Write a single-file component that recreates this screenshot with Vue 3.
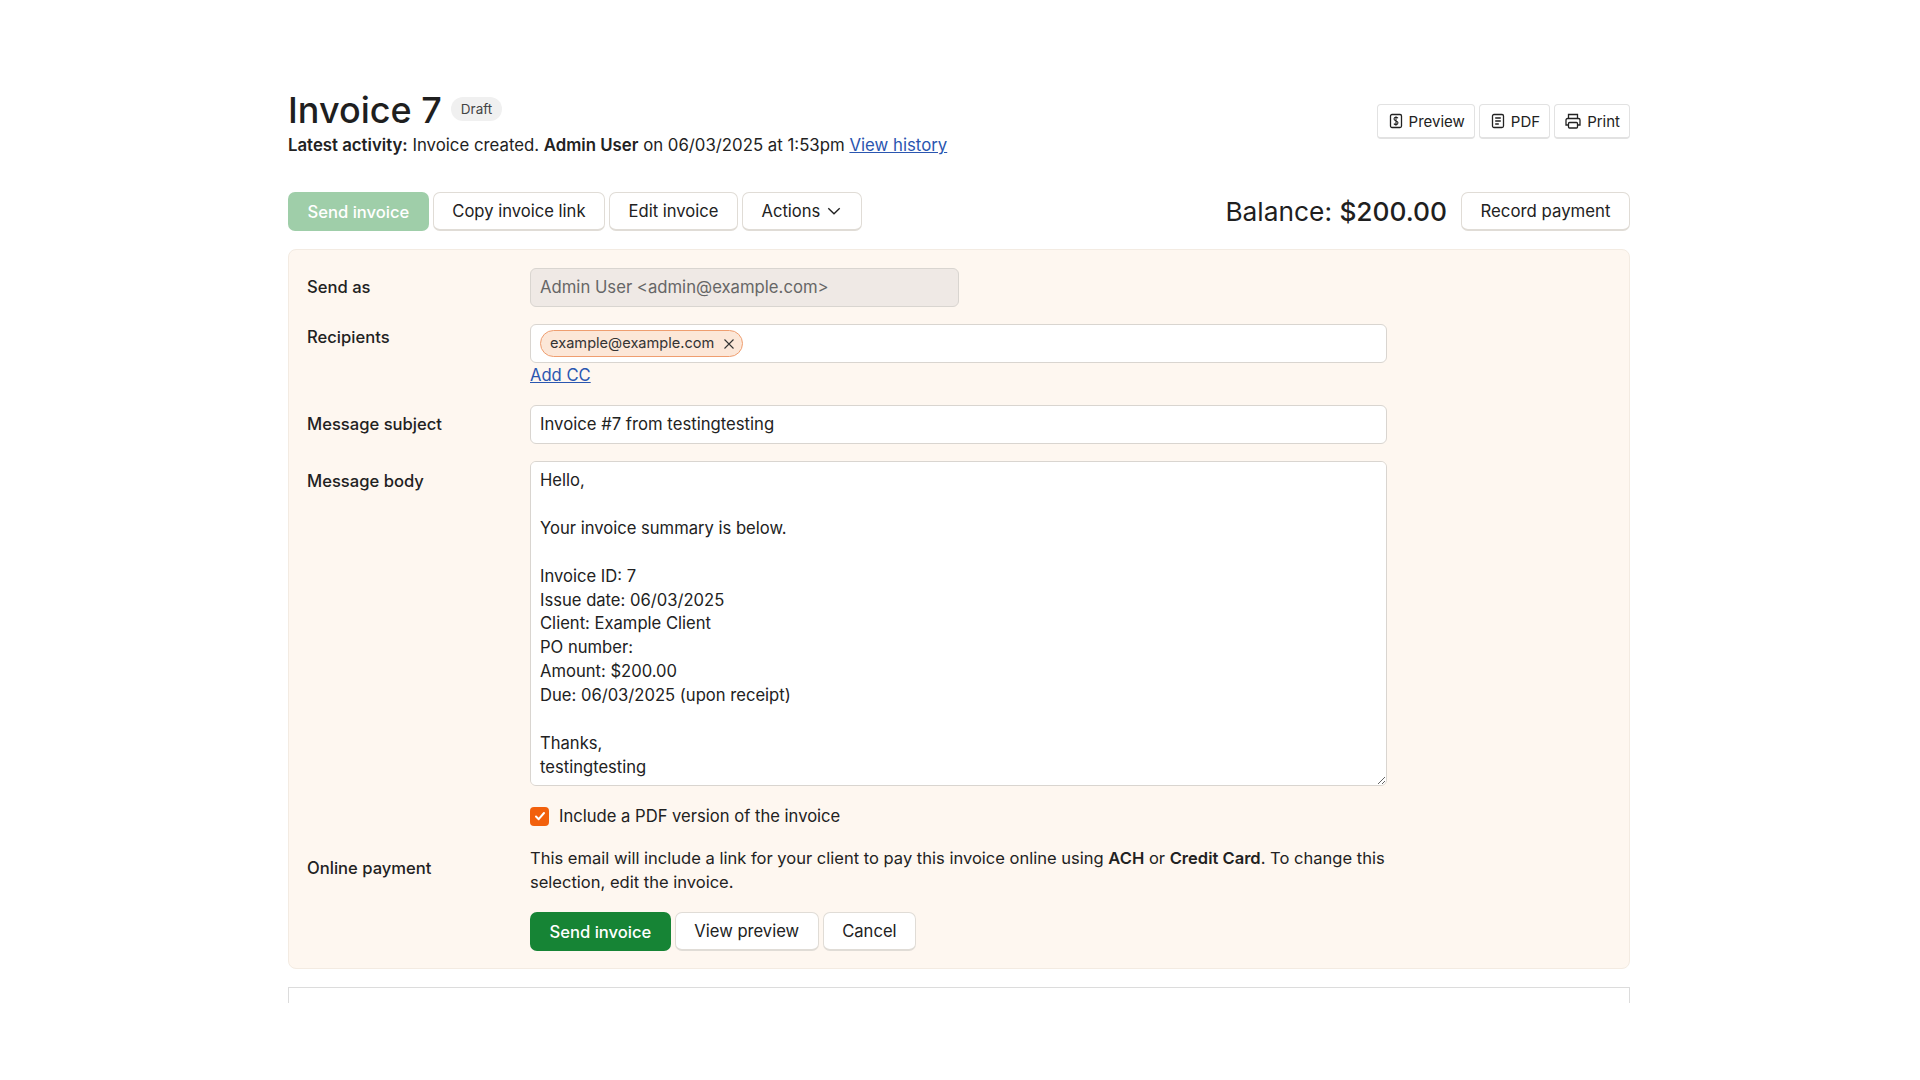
<script setup>
const body = `Hello,

Your invoice summary is below.

Invoice ID: 7
Issue date: 06/03/2025
Client: Example Client
PO number:
Amount: $200.00
Due: 06/03/2025 (upon receipt)

Thanks,
testingtesting`
</script>

<template>
  <div class="page">
    <header class="head">
      <div>
        <div class="title-row">
          <h1>Invoice 7</h1>
          <span class="badge">Draft</span>
        </div>
        <p class="activity"><b>Latest activity:</b> Invoice created. <b>Admin User</b> on 06/03/2025 at 1:53pm <a href="#">View history</a></p>
      </div>
      <div class="tools">
        <button class="tool wide">
          <svg width="16" height="16" viewBox="0 0 16 16" fill="none" stroke="currentColor" stroke-width="1.3"><rect x="2.5" y="1.5" width="11" height="13" rx="1.5"/><path d="M10 5.2C9.6 4.6 9 4.3 8 4.3c-1.2 0-2 .6-2 1.7 0 2.3 4 1.5 4 3.8 0 1.1-.8 1.8-2 1.8-1 0-1.700-.4-2.100-1M8 3.300v9.400" stroke-width="1.1"/></svg>
          Preview
        </button>
        <button class="tool wide">
          <svg width="16" height="16" viewBox="0 0 16 16" fill="none" stroke="currentColor" stroke-width="1.3"><rect x="2.500" y="1.500" width="11" height="13" rx="1.500"/><path d="M5.200 5h5.600M5.200 8h5.600M5.200 11h3.600"/></svg>
          PDF
        </button>
        <button class="tool">
          <svg width="18" height="18" viewBox="0 0 18 18" fill="none" stroke="currentColor" stroke-width="1.300"><path d="M4.500 6.500V2.500h9v4M4.500 13H2V8a1.500 1.500 0 0 1 1.500-1.500h11A1.500 1.500 0 0 1 16 8v5h-2.500"/><rect x="4.500" y="10.500" width="9" height="5.500" rx="1"/></svg>
          Print
        </button>
      </div>
    </header>

    <div class="actions">
      <div class="group">
        <button class="btn primary disabled">Send invoice</button>
        <button class="btn">Copy invoice link</button>
        <button class="btn">Edit invoice</button>
        <button class="btn">Actions
          <svg width="16" height="16" viewBox="0 0 14 14" fill="none" stroke="currentColor" stroke-width="1.200"><path d="M2 4.500l5 5 5-5"/></svg>
        </button>
      </div>
      <div class="group balance-group">
        <span class="balance">Balance: <span class="amount">$200.00</span></span>
        <button class="btn record">Record payment</button>
      </div>
    </div>

    <section class="panel">
      <div class="row first">
        <label>Send as</label>
        <div class="field narrow disabled-field">Admin User &lt;admin@example.com&gt;</div>
      </div>
      <div class="row recipients">
        <label class="tight">Recipients</label>
        <div class="col">
          <div class="field chips">
            <span class="chip">example@example.com
              <svg width="12" height="12" viewBox="0 0 12 12" fill="none" stroke="currentColor" stroke-width="1.100"><path d="M1.500 1.500l9 9M10.500 1.500l-9 9"/></svg>
            </span>
          </div>
          <a href="#" class="add-cc">Add CC</a>
        </div>
      </div>
      <div class="row subject">
        <label>Message subject</label>
        <div class="field">Invoice #7 from testingtesting</div>
      </div>
      <div class="row message">
        <label>Message body</label>
        <textarea class="area" :value="body" readonly></textarea>
      </div>
      <div class="row check">
        <span class="spacer"></span>
        <div class="check-wrap">
          <span class="box">
            <svg width="12" height="12" viewBox="0 0 12 12" fill="none" stroke="#fff" stroke-width="2" stroke-linecap="round" stroke-linejoin="round"><path d="M2 6.500l2.700 2.700L10 3"/></svg>
          </span>
          Include a PDF version of the invoice
        </div>
      </div>
      <div class="row online">
        <label class="online-label">Online payment</label>
        <p class="note">This email will include a link for your client to pay this invoice online using <b>ACH</b> or <b>Credit Card</b>. To change this selection, edit the invoice.</p>
      </div>
      <div class="row foot">
        <span class="spacer"></span>
        <div class="group">
          <button class="btn primary">Send invoice</button>
          <button class="btn">View preview</button>
          <button class="btn">Cancel</button>
        </div>
      </div>
    </section>

    <div class="clip"><div class="next-card"></div></div>
  </div>
</template>

<style>
html, body { margin: 0; background: #fff; }
</style>

<style scoped>
.page {
  width: 1342px;
  margin-left: 288px;
  padding-top: 86px;
  font-family: Inter, "Noto Sans", sans-serif;
  font-size: 16.6px;
  color: #222;
  height: 918px;
  overflow: hidden;
}
.head { display: flex; justify-content: space-between; align-items: flex-start; }
.title-row { display: flex; align-items: center; gap: 9px; height: 48px; }
h1 { margin: 0; font-size: 36px; font-weight: 500; line-height: 48px; color: #1f1f1f; }
.badge {
  background: #f0f0f0; border-radius: 12px; font-size: 13.500px; color: #444;
  padding: 0 10px; line-height: 24px; margin-top: -2px;
}
.activity { margin: -1px 0 0; line-height: 24px; font-size: 16.800px; }
.activity b { font-weight: 600; }
a { color: #2a56b0; text-decoration: underline; }
.tools { display: flex; gap: 4px; margin-top: 18px; }
.tool {
  display: flex; align-items: center; gap: 5px; height: 35px; padding: 0 9px;
  background: #fff; border: 1px solid #e2e2e2; border-bottom-width: 2px; border-radius: 4px;
  font: 400 15px Inter, sans-serif; color: #222;
}
.tool.wide { padding-left: 10px; }
.actions { display: flex; justify-content: space-between; align-items: center; margin-top: 35px; }
.group { display: flex; gap: 4px; align-items: center; }
.balance-group { gap: 14px; }
.balance { font-size: 26.300px; font-weight: 400; color: #1f1f1f; }
.amount { font-weight: 500; }
.btn {
  display: flex; align-items: center; gap: 6px; height: 39px; padding: 0 18.500px;
  background: #fff; border: 1px solid #e0dcd6; border-bottom-width: 2px; border-radius: 7px;
  font: 400 16.600px Inter, sans-serif; color: #222;
}
.btn.record { font-size: 16.800px; }
.btn.primary { background: #168435; border: 0; color: #fff; font-weight: 500; padding: 0 19.500px; }
.btn.primary.disabled { background: #9fcea9; }
.panel {
  margin-top: 18px; height: 720px; box-sizing: border-box; padding: 18px 18px 0;
  background: #fef7f0; border: 1px solid #f3ebe2; border-radius: 8px;
}
.row { display: grid; grid-template-columns: 223px 1fr; }
.row label { font-weight: 500; line-height: 38px; }
.row label.tight { line-height: 24px; margin-top: 1px; }
.field {
  box-sizing: border-box; width: 857px; height: 39px; padding: 0 9px; line-height: 37px; font-size: 16.700px;
  background: #fff; border: 1px solid #d9d5d0; border-radius: 6px;
}
.narrow { width: 429px; }
.disabled-field { background: #efe9e5; color: #666; }
.recipients { margin-top: 17px; }
.chips { display: flex; align-items: center; }
.chip {
  display: flex; align-items: center; gap: 9px; height: 27px; box-sizing: border-box; padding: 0 7px 0 9px;
  background: #fce7d8; border: 1px solid #ef9e70; border-radius: 14px; font-size: 14.600px; color: #333; line-height: 25px;
}
.add-cc { display: block; line-height: 24px; margin-top: 0; }
.subject { margin-top: 18px; }
.message { margin-top: 17px; }
.row.message label { line-height: 40px; }
.area {
  display: block; box-sizing: border-box; width: 857px; height: 325px; padding: 7px 9px; margin: 0;
  font: 400 16.600px/23.900px Inter, sans-serif; color: #222; background: #fff;
  border: 1px solid #d9d5d0; border-radius: 6px; outline: none;
}
.check { margin-top: 20px; }
.check-wrap { display: flex; align-items: center; gap: 10px; line-height: 20px; }
.box {
  width: 19px; height: 19px; border-radius: 4px; background: #f2600c;
  display: flex; align-items: center; justify-content: center;
}
.online { margin-top: 20px; }
.row label.online-label { line-height: 24px; margin-top: 9.500px; }
.note { margin: 0; width: 857px; line-height: 24px; font-size: 16.550px; }
.note b { font-weight: 600; }
.foot { margin-top: 18px; }
.clip { height: 16px; overflow: hidden; margin-top: 18px; }
.next-card { height: 40px; border: 1px solid #dcdcdc; }
</style>
